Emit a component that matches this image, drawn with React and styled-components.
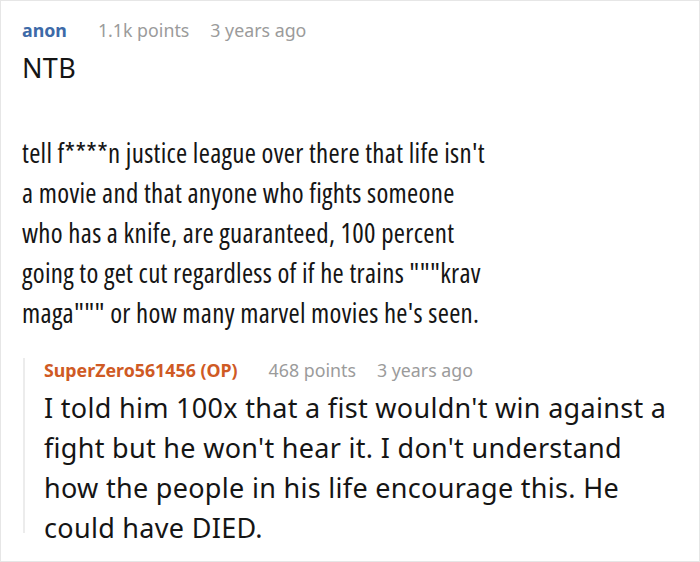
import React from 'react';
import styled, { createGlobalStyle } from 'styled-components';

const GlobalStyle = createGlobalStyle`
  html, body {
    margin: 0;
    padding: 0;
    background: #fff;
  }
`;

// 카드 전체 틀
const Card = styled.div`
  box-sizing: border-box;
  width: 700px;
  height: 562px;
  border: 1px solid #e6e6e6;
  padding: 17px 21px 0 21px;
  font-family: "Noto Sans", "Open Sans", sans-serif;
  color: #151515;
  overflow: hidden;
`;

const Header = styled.div`
  display: flex;
  align-items: baseline;
  height: 24px;
  line-height: 24px;
  font-size: 17.8px;
  margin-bottom: 6px;
  white-space: nowrap;
`;

const Author = styled.span`
  font-weight: 700;
  color: ${(p) => p.$color};
  margin-right: 31px;
`;

const Meta = styled.span`
  color: #9b9b9b;
  margin-right: 21px;
`;

const Body = styled.p`
  margin: 0;
  font-size: 27px;
  line-height: 40px;
  letter-spacing: 0.3px;
  white-space: nowrap;
  & + & {
    margin-top: 45px;
  }
`;

// 첫 댓글 본문은 가로로 눌린 모양
const CondensedBody = styled(Body)`
  font-family: "Open Sans", sans-serif;
  font-stretch: 75%;
  letter-spacing: 0.3px;
`;

const Reply = styled.div`
  margin-top: 36px;
  margin-left: 1px;
  border-left: 2px solid #ececec;
  padding-left: 19px;
  height: 175px;
`;

const ReplyInner = styled.div`
  margin-top: -11px;
`;

function Comment({ author, color, points, time, children }) {
  return (
    <>
      <Header>
        <Author $color={color}>{author}</Author>
        <Meta>{points}</Meta>
        <Meta>{time}</Meta>
      </Header>
      {children}
    </>
  );
}

export default function App() {
  return (
    <>
      <GlobalStyle />
      <Card>
        <Comment author="anon" color="#3d6aa8" points="1.1k points" time="3 years ago">
          <Body>NTB</Body>
          <CondensedBody>
            tell f****n justice league over there that life isn't<br />
            a movie and that anyone who fights someone<br />
            who has a knife, are guaranteed, 100 percent<br />
            going to get cut regardless of if he trains """krav<br />
            maga""" or how many marvel movies he's seen.
          </CondensedBody>
        </Comment>
        <Reply>
          <ReplyInner>
            <Comment author="SuperZero561456 (OP)" color="#cf5a24" points="468 points" time="3 years ago">
              <Body>
                I told him 100x that a fist wouldn't win against a<br />
                fight but he won't hear it. I don't understand<br />
                how the people in his life encourage this. He<br />
                could have DIED.
              </Body>
            </Comment>
          </ReplyInner>
        </Reply>
      </Card>
    </>
  );
}
